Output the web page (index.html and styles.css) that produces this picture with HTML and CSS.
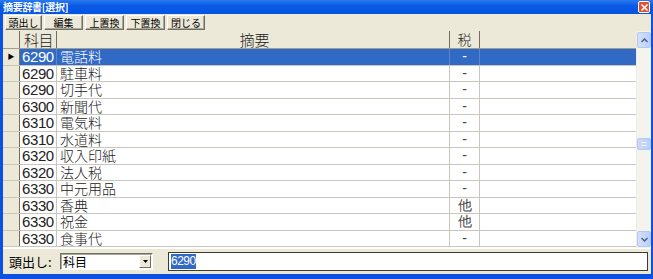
FILE: index.html
```html
<!DOCTYPE html>
<html lang="ja">
<head>
    <meta charset="UTF-8">
    <title>摘要辞書[選択]</title>
    <link rel="stylesheet" href="styles.css">
</head>
<body>
    <div class="window">
        <div class="title-bar">
            <span class="title-text">摘要辞書[選択]</span>
            <span class="close-btn">
                <svg width="9" height="9" viewBox="0 0 9 9"><path d="M1.5 1.5 L7.5 7.5 M7.5 1.5 L1.5 7.5" stroke="#fff" stroke-width="1.6"/></svg>
            </span>
        </div>

        <div class="toolbar">
            <button class="tool-btn">頭出し</button>
            <button class="tool-btn">編集</button>
            <button class="tool-btn">上置換</button>
            <button class="tool-btn">下置換</button>
            <button class="tool-btn">閉じる</button>
        </div>

        <div class="grid-area">
            <div class="grid">
                <div class="grid-row header">
                    <div class="cell sel"></div>
                    <div class="cell code">科目</div>
                    <div class="cell desc">摘要</div>
                    <div class="cell tax">税</div>
                    <div class="cell rest"></div>
                </div>
                <div class="grid-row selected">
                    <div class="cell sel"><span class="pointer">▶</span></div>
                    <div class="cell code">6290</div>
                    <div class="cell desc">電話料</div>
                    <div class="cell tax">-</div>
                    <div class="cell rest"></div>
                </div>
                <div class="grid-row">
                    <div class="cell sel"></div>
                    <div class="cell code">6290</div>
                    <div class="cell desc">駐車料</div>
                    <div class="cell tax">-</div>
                    <div class="cell rest"></div>
                </div>
                <div class="grid-row">
                    <div class="cell sel"></div>
                    <div class="cell code">6290</div>
                    <div class="cell desc">切手代</div>
                    <div class="cell tax">-</div>
                    <div class="cell rest"></div>
                </div>
                <div class="grid-row">
                    <div class="cell sel"></div>
                    <div class="cell code">6300</div>
                    <div class="cell desc">新聞代</div>
                    <div class="cell tax">-</div>
                    <div class="cell rest"></div>
                </div>
                <div class="grid-row">
                    <div class="cell sel"></div>
                    <div class="cell code">6310</div>
                    <div class="cell desc">電気料</div>
                    <div class="cell tax">-</div>
                    <div class="cell rest"></div>
                </div>
                <div class="grid-row">
                    <div class="cell sel"></div>
                    <div class="cell code">6310</div>
                    <div class="cell desc">水道料</div>
                    <div class="cell tax">-</div>
                    <div class="cell rest"></div>
                </div>
                <div class="grid-row">
                    <div class="cell sel"></div>
                    <div class="cell code">6320</div>
                    <div class="cell desc">収入印紙</div>
                    <div class="cell tax">-</div>
                    <div class="cell rest"></div>
                </div>
                <div class="grid-row">
                    <div class="cell sel"></div>
                    <div class="cell code">6320</div>
                    <div class="cell desc">法人税</div>
                    <div class="cell tax">-</div>
                    <div class="cell rest"></div>
                </div>
                <div class="grid-row">
                    <div class="cell sel"></div>
                    <div class="cell code">6330</div>
                    <div class="cell desc">中元用品</div>
                    <div class="cell tax">-</div>
                    <div class="cell rest"></div>
                </div>
                <div class="grid-row">
                    <div class="cell sel"></div>
                    <div class="cell code">6330</div>
                    <div class="cell desc">香典</div>
                    <div class="cell tax">他</div>
                    <div class="cell rest"></div>
                </div>
                <div class="grid-row">
                    <div class="cell sel"></div>
                    <div class="cell code">6330</div>
                    <div class="cell desc">祝金</div>
                    <div class="cell tax">他</div>
                    <div class="cell rest"></div>
                </div>
                <div class="grid-row">
                    <div class="cell sel"></div>
                    <div class="cell code">6330</div>
                    <div class="cell desc">食事代</div>
                    <div class="cell tax">-</div>
                    <div class="cell rest"></div>
                </div>
            </div>

            <div class="scrollbar">
                <div class="scroll-btn">
                    <svg width="7" height="5" viewBox="0 0 7 5"><path d="M0.5 4 L3.5 1 L6.5 4" fill="none" stroke="#4d6185" stroke-width="1.5"/></svg>
                </div>
                <div class="scroll-track">
                    <div class="scroll-thumb"><span></span></div>
                </div>
                <div class="scroll-btn">
                    <svg width="7" height="5" viewBox="0 0 7 5"><path d="M0.5 1 L3.5 4 L6.5 1" fill="none" stroke="#4d6185" stroke-width="1.5"/></svg>
                </div>
            </div>
        </div>

        <div class="search-bar">
            <span class="search-label">頭出し:</span>
            <div class="combo">
                <span class="combo-text">科目</span>
                <span class="combo-btn">
                    <svg width="5" height="3" viewBox="0 0 5 3"><path d="M0 0 H5 L2.5 3 Z" fill="#000"/></svg>
                </span>
            </div>
            <div class="search-input"><span class="highlight">6290</span></div>
        </div>
    </div>
</body>
</html>
```

FILE: styles.css
```css
* {
    margin: 0;
    padding: 0;
    box-sizing: border-box;
}

body {
    width: 653px;
    height: 279px;
    overflow: hidden;
    font-family: "Noto Sans CJK JP", "Liberation Sans", sans-serif;
    background: #0a4ee4;
}

.window {
    width: 653px;
    height: 279px;
    display: flex;
    flex-direction: column;
    background: #0b52e3;
    padding: 0 2px 5px 3px;
}

.title-bar {
    height: 14px;
    margin: 0 -2px 0 -3px;
    padding: 0 3px 0 3px;
    display: flex;
    align-items: center;
    justify-content: space-between;
    background: linear-gradient(to bottom, #2a7bf0 0%, #0a5ae6 40%, #0554e2 100%);
}

.title-text {
    color: #fff;
    font-size: 10px;
    font-weight: 700;
    line-height: 14px;
    letter-spacing: -0.3px;
}

.close-btn {
    width: 12px;
    height: 12px;
    border: 1px solid #fff;
    border-radius: 2px;
    background: #e0502e;
    display: flex;
    align-items: center;
    justify-content: center;
}

.toolbar {
    height: 17px;
    display: flex;
    align-items: center;
    gap: 2px;
    padding-left: 2px;
    background: #ece9d8;
}

.tool-btn {
    height: 15px;
    padding: 0;
    white-space: nowrap;
    font-family: "Noto Sans CJK JP", sans-serif;
    font-size: 10px;
    line-height: 13px;
    color: #000;
    background: #ece9d8;
    border: 1px solid;
    border-color: #fff #716f64 #716f64 #fff;
    box-shadow: inset -1px -1px 0 #aca899;
}

.tool-btn:nth-child(1) { width: 37px; }
.tool-btn:nth-child(2) { width: 39px; }
.tool-btn:nth-child(3) { width: 39px; }
.tool-btn:nth-child(4) { width: 39px; }
.tool-btn:nth-child(5) { width: 38px; }

.grid-area {
    height: 217px;
    display: flex;
    background: #fff;
}

.grid {
    flex: 1;
    display: flex;
    flex-direction: column;
    background: #fff;
    overflow: hidden;
}

.grid-row {
    display: flex;
    height: 16.5px;
    border-bottom: 1px solid #c8c6bd;
    font-size: 14px;
    font-weight: 300;
    line-height: 15px;
    color: #222;
}

.grid-row.header {
    height: 18px;
    background: #ece9d8;
    border-bottom: 1px solid #a09d90;
    font-size: 15px;
    line-height: 17px;
}

.cell {
    height: 100%;
    overflow: hidden;
    white-space: nowrap;
    border-right: 1px solid #c8c6bd;
}

.cell.sel {
    width: 17px;
    background: #ece9d8;
    border-right: 1px solid #716f64;
    display: flex;
    align-items: center;
    justify-content: center;
}

.pointer {
    font-size: 7px;
    color: #000;
    line-height: 1;
}

.cell.code {
    width: 37px;
    padding-left: 2px;
    font-family: "Liberation Sans", sans-serif;
    font-size: 15px;
    letter-spacing: -0.4px;
}

.cell.desc {
    width: 393px;
    padding-left: 3px;
}

.cell.tax {
    width: 30px;
    text-align: center;
    font-family: "Liberation Sans", sans-serif;
    color: #444;
}

.cell.rest {
    flex: 1;
    border-right: none;
}

.header .cell {
    border-right: 1px solid #716f64;
}

.header .cell.code,
.header .cell.tax {
    font-family: "Noto Sans CJK JP", sans-serif;
    color: #222;
}

.header .cell.code {
    padding-left: 4px;
}

.header .cell.desc {
    text-align: center;
}

.header .cell.rest {
    border-right: none;
}

.grid-row .cell.tax:has(+ .rest) {
    font-size: 14px;
}

.grid-row.selected .cell.code,
.grid-row.selected .cell.desc,
.grid-row.selected .cell.tax,
.grid-row.selected .cell.rest {
    background: #316ac5;
    color: #fff;
    border-right-color: #5a86cf;
}

.scrollbar {
    width: 15px;
    display: flex;
    flex-direction: column;
    background: #f4f3ee;
    border-left: 1px solid #eeede5;
}

.scroll-btn {
    height: 16px;
    margin: 1px 0;
    border: 1px solid #b6c8ef;
    border-radius: 2px;
    background: linear-gradient(to right, #d4e0fb, #bccff8);
    display: flex;
    align-items: center;
    justify-content: center;
}

.scroll-track {
    flex: 1;
    display: flex;
    flex-direction: column;
    padding-top: 89px;
}

.scroll-thumb {
    height: 12px;
    border: 1px solid #b6c8ef;
    border-radius: 2px;
    background: linear-gradient(to right, #cbdaf9, #b9cdf7);
    display: flex;
    align-items: center;
    justify-content: center;
}

.scroll-thumb span {
    width: 6px;
    height: 4px;
    border-top: 1px solid #eef3fd;
    border-bottom: 1px solid #eef3fd;
}

.search-bar {
    flex: 1;
    display: flex;
    align-items: center;
    background: #ece9d8;
    border-top: 1px solid #fff;
    padding-left: 6px;
}

.search-label {
    width: 51px;
    font-size: 13px;
    color: #000;
    white-space: nowrap;
}

.combo {
    width: 93px;
    height: 17px;
    display: flex;
    align-items: center;
    background: #fff;
    border: 1px solid;
    border-color: #716f64 #fff #fff #716f64;
    box-shadow: inset 1px 1px 0 #aca899;
}

.combo-text {
    flex: 1;
    font-size: 12px;
    line-height: 15px;
    padding-left: 2px;
}

.combo-btn {
    width: 12px;
    height: 13px;
    margin-right: 1px;
    background: #ece9d8;
    border: 1px solid;
    border-color: #fff #716f64 #716f64 #fff;
    display: flex;
    align-items: center;
    justify-content: center;
}

.search-input {
    width: 480px;
    height: 19px;
    margin-left: 15px;
    background: #fff;
    border: 1px solid #3e3a2a;
    display: flex;
    align-items: center;
    padding-left: 2px;
}

.highlight {
    background: #316ac5;
    color: #fff;
    font-family: "Liberation Sans", sans-serif;
    font-size: 12px;
    line-height: 15px;
    letter-spacing: -0.5px;
}
```
